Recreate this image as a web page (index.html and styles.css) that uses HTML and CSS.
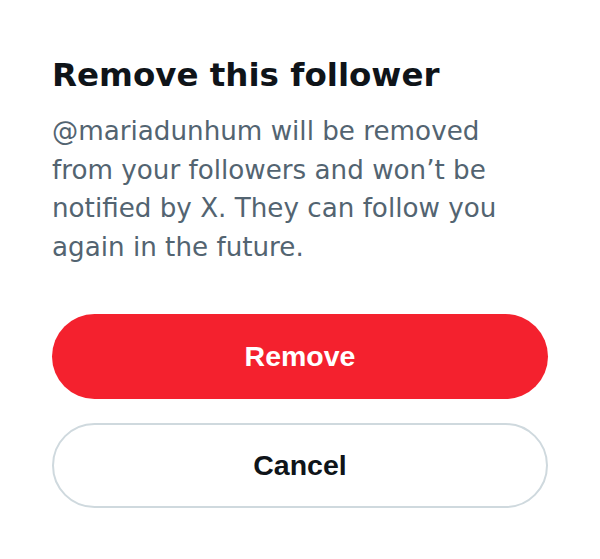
FILE: index.html
```html
<!DOCTYPE html>
<html lang="en">
<head>
    <meta charset="UTF-8">
    <meta name="viewport" content="width=device-width, initial-scale=1.0">
    <title>Remove this follower</title>
    <link rel="stylesheet" href="styles.css">
</head>
<body>
    <div class="dialog">
        <h1 class="dialog-title">Remove this follower</h1>
        <p class="dialog-text">@mariadunhum will be removed from your followers and won’t be notified by X. They can follow you again in the future.</p>

        <div class="button-col">
            <button type="button" class="btn btn-danger">Remove</button>
            <button type="button" class="btn btn-outline">Cancel</button>
        </div>
    </div>
</body>
</html>
```

FILE: styles.css
```css
* {
    margin: 0;
    padding: 0;
    box-sizing: border-box;
    font-family: 'DejaVu Sans', sans-serif;
}

body {
    background-color: #ffffff;
    width: 600px;
    height: 559px;
}

.dialog {
    padding: 55px 52px 0 52px;
}

.dialog-title {
    font-size: 32.5px;
    line-height: 40px;
    font-weight: 700;
    color: #0f1419;
}

.dialog-text {
    max-width: 462px;
    margin-top: 17px;
    font-size: 26.2px;
    line-height: 38.5px;
    color: #536471;
}

.button-col {
    display: flex;
    flex-direction: column;
    gap: 24px;
    margin-top: 47.5px;
}

.btn {
    width: 100%;
    height: 85px;
    border-radius: 43px;
    font-family: 'Liberation Sans', Arial, sans-serif;
    font-size: 28.5px;
    font-weight: 700;
    cursor: pointer;
}

.btn-danger {
    border: none;
    background-color: #f4212e;
    color: #ffffff;
}

.btn-outline {
    border: 2px solid #cfd9de;
    background-color: #ffffff;
    color: #0f1419;
}
```
